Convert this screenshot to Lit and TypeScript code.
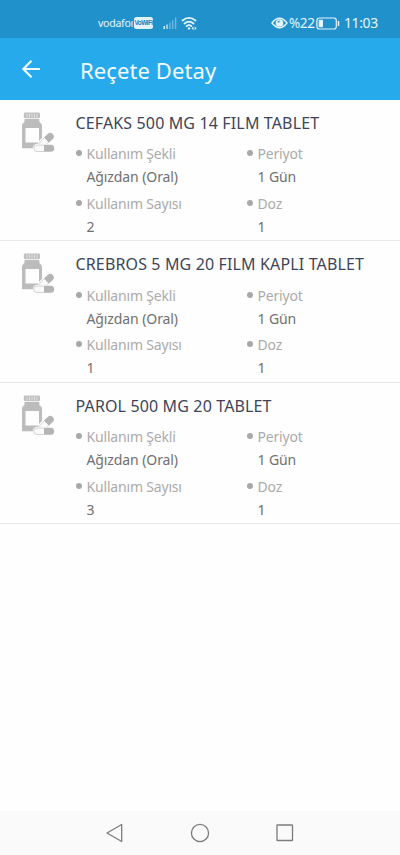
import { LitElement, html, css } from "lit";
import { customElement, property } from "lit/decorators.js";

interface Medicine {
  name: string;
  form: string;
  period: string;
  count: string;
  dose: string;
}

const medicines: Medicine[] = [
  { name: "CEFAKS 500 MG 14 FILM TABLET", form: "Ağızdan (Oral)", period: "1 Gün", count: "2", dose: "1" },
  { name: "CREBROS 5 MG 20 FILM KAPLI TABLET", form: "Ağızdan (Oral)", period: "1 Gün", count: "1", dose: "1" },
  { name: "PAROL 500 MG 20 TABLET", form: "Ağızdan (Oral)", period: "1 Gün", count: "3", dose: "1" },
];

@customElement("status-bar")
class StatusBar extends LitElement {
  static styles = css`
    :host { display: flex; align-items: center; height: 38px; box-sizing: border-box; padding: 8px 22px 0 98px; background: #2191cc; color: #e4f5fd; }
    .carrier { width: 34px; white-space: nowrap; font-size: 10.6px; line-height: 16px; letter-spacing: -0.3px; }
    .badge { display: flex; justify-content: center; width: 19px; height: 12px; margin-left: 2px; border-radius: 2.5px; background: #dff3fc; color: #2181b7; font: 700 6.4px/12px "Liberation Sans", sans-serif; letter-spacing: -0.5px; }
    .signal { width: 14px; height: 14px; margin-left: 9.5px; }
    .wifi { width: 18px; height: 15px; margin-left: 4px; }
    .eye { width: 17px; height: 14px; margin-left: auto; }
    .percent { width: 26px; margin-left: 1.5px; font-size: 13.5px; line-height: 18px; letter-spacing: -0.4px; }
    .battery { width: 24px; height: 13px; margin-left: 1px; }
    .clock { width: 34px; margin-left: 4px; font-size: 14px; line-height: 18px; letter-spacing: -0.4px; white-space: nowrap; }
  `;
  render() {
    return html`
      <span class="carrier">vodafoı</span>
      <span class="badge">VoWiFi</span>
      <svg class="signal" viewBox="0 0 14 14" stroke-width="1.4">
        <path d="M1.2 10v3" stroke="#e4f5fd" /><path d="M4 8.5v4.5" stroke="#c6e5f5" />
        <path d="M6.9 6.5V13M9.7 4.2V13M12.6 1.5V13" stroke="#70b9de" />
      </svg>
      <svg class="wifi" viewBox="0 0 18 15" fill="none" stroke="#e4f5fd" stroke-width="1.7" stroke-linecap="round">
        <path d="M1.5 4.5Q8 -.8 14.5 4.5M3.5 7.5Q8 3.8 12.5 7.5M5.6 10.1Q8 8.2 10.4 10.1" />
        <circle cx="8" cy="12.4" r="1.2" fill="#e4f5fd" stroke="none" />
        <path d="M10.6 12.3l1.900-1.900v3.800zM15.600 12.300l-1.900-1.900v3.800z" fill="#e4f5fd" stroke="none" />
      </svg>
      <svg class="eye" viewBox="0 0 17 14">
        <path d="M1 7Q8.5-2.5 16 7Q8.5 16.5 1 7Z" fill="none" stroke="#e4f5fd" stroke-width="1.4" />
        <circle cx="8.5" cy="7" r="3.8" fill="#e4f5fd" /><path d="M8.5 6.5V4.4A2.300 2.300 0 0 0 6.400 6.500Z" fill="#2191cc" />
      </svg>
      <span class="percent">%22</span>
      <svg class="battery" viewBox="0 0 24 13">
        <rect x=".9" y="1" width="19.4" height="11" rx="2.5" fill="none" stroke="#e4f5fd" stroke-width="1.2" />
        <rect x="2.7" y="2.8" width="4.3" height="7.4" rx=".8" fill="#e4f5fd" />
        <path d="M22.5 4v5" stroke="#e4f5fd" stroke-width="1.5" />
      </svg>
      <span class="clock">11:03</span>
    `;
  }
}

@customElement("medicine-field")
class MedicineField extends LitElement {
  @property() label = "";
  @property() value = "";
  static styles = css`
    :host { display: grid; grid-template-columns: 11px 1fr; white-space: nowrap; }
    .dot { width: 6px; height: 6px; margin-top: 7px; border-radius: 50%; background: #a8a8a8; }
    .label { color: #ababab; font-size: 14px; line-height: 22px; letter-spacing: -0.18px; }
    .value { grid-column: 2; color: #707070; font-size: 14px; line-height: 23px; letter-spacing: -0.1px; }
  `;
  render() {
    return html`<i class="dot"></i><span class="label">${this.label}</span><span class="value">${this.value}</span>`;
  }
}

@customElement("medicine-row")
class MedicineRow extends LitElement {
  @property({ attribute: false }) item!: Medicine;
  static styles = css`
    :host { display: flex; box-sizing: border-box; height: 141.4px; border-bottom: 1px solid #e8e8e8; padding-left: 20px; }
    .icon { width: 36px; height: 44px; margin-top: 11px; flex: none; }
    .body { flex: 1; margin-left: 19.5px; padding-top: 11px; }
    .name { margin: 0; color: #3f4558; font-size: 16px; line-height: 24px; font-weight: 400; white-space: nowrap; letter-spacing: 0.14px; }
    .fields { display: grid; grid-template-columns: 171px 1fr; row-gap: 4.5px; margin-top: 8.3px; }
  `;
  render() {
    const m = this.item;
    return html`
      <svg class="icon" viewBox="0 0 36 44">
        <rect x="3.8" y="1.5" width="16.2" height="5.700" rx="1.4" fill="#c0c0c0" />
        <path d="M7 2.500v4M9.500 2.500v4M12 2.500v4M14.500 2.500v4M17 2.500v4" stroke="#e4e4e4" stroke-width=".9" />
        <path d="M4.500 8h14.800v2.200q0 .9 1.300 1.900t1.400 2.700V37.300H2V14.800q0-1.700 1.300-2.700T4.500 10.200Z" fill="#bcbcbc" />
        <rect x="5.500" y="17" width="13.500" height="14.500" fill="#fefefe" />
        <g transform="rotate(-42 27 28.500)">
          <rect x="17" y="24" width="18.500" height="9" rx="4.500" fill="#fefefe" />
          <path d="M26 24.900h5.300a3.600 3.600 0 0 1 0 7.200H26Z" fill="#b4b4b4" />
          <path d="M26 25.300h-4.500a3.200 3.200 0 0 0 0 6.400H26" fill="#fafafa" stroke="#c8c8c8" stroke-width=".7" />
        </g>
        <rect x="12.800" y="32.800" width="22.200" height="9" rx="4.500" fill="#fefefe" />
        <path d="M24 33.800h6.700a3.500 3.500 0 0 1 0 7H24Z" fill="#b4b4b4" />
        <path d="M24 34.100h-7a3.200 3.200 0 0 0 0 6.400h7" fill="#fafafa" stroke="#c8c8c8" stroke-width=".8" />
      </svg>
      <div class="body">
        <h2 class="name">${m.name}</h2>
        <div class="fields">
          <medicine-field label="Kullanım Şekli" .value=${m.form}></medicine-field>
          <medicine-field label="Periyot" .value=${m.period}></medicine-field>
          <medicine-field label="Kullanım Sayısı" .value=${m.count}></medicine-field>
          <medicine-field label="Doz" .value=${m.dose}></medicine-field>
        </div>
      </div>
    `;
  }
}

@customElement("app-root")
class AppRoot extends LitElement {
  static styles = css`
    :host { display: flex; flex-direction: column; height: 100vh; overflow: hidden; background: #fefefe; font-family: "Noto Sans", sans-serif; }
    .header { display: flex; align-items: center; height: 62px; flex: none; background: #27aaeb; color: #f4fcff; }
    .back { width: 20px; height: 20px; margin-left: 21px; }
    .title { margin: 1px 0 0 39px; font-size: 22px; line-height: 30px; font-weight: 400; letter-spacing: 0.1px; }
    .list { flex: 1; min-height: 0; }
    .nav { display: flex; justify-content: center; align-items: center; gap: 65px; height: 44px; flex: none; background: #fafafa; }
    .key { width: 20px; height: 20px; fill: none; stroke: #7c7c7c; stroke-width: 1.3; stroke-linejoin: round; }
  `;
  render() {
    return html`
      <status-bar></status-bar>
      <header class="header">
        <svg class="back" viewBox="0 0 20 20" fill="none" stroke="#f4fcff" stroke-width="2.1"><path d="M19 10H3M10.500 1.800L2.300 10l8.200 8.200" /></svg>
        <h1 class="title">Reçete Detay</h1>
      </header>
      <main class="list">${medicines.map((m) => html`<medicine-row .item=${m}></medicine-row>`)}</main>
      <nav class="nav">
        <svg class="key" viewBox="0 0 20 20"><path d="M2 10L16.700 1.500v17Z" /></svg>
        <svg class="key" viewBox="0 0 20 20"><circle cx="10" cy="10" r="8.600" /></svg>
        <svg class="key" viewBox="0 0 20 20"><rect x="2" y="2" width="15.500" height="15.500" rx=".6" /></svg>
      </nav>
    `;
  }
}
